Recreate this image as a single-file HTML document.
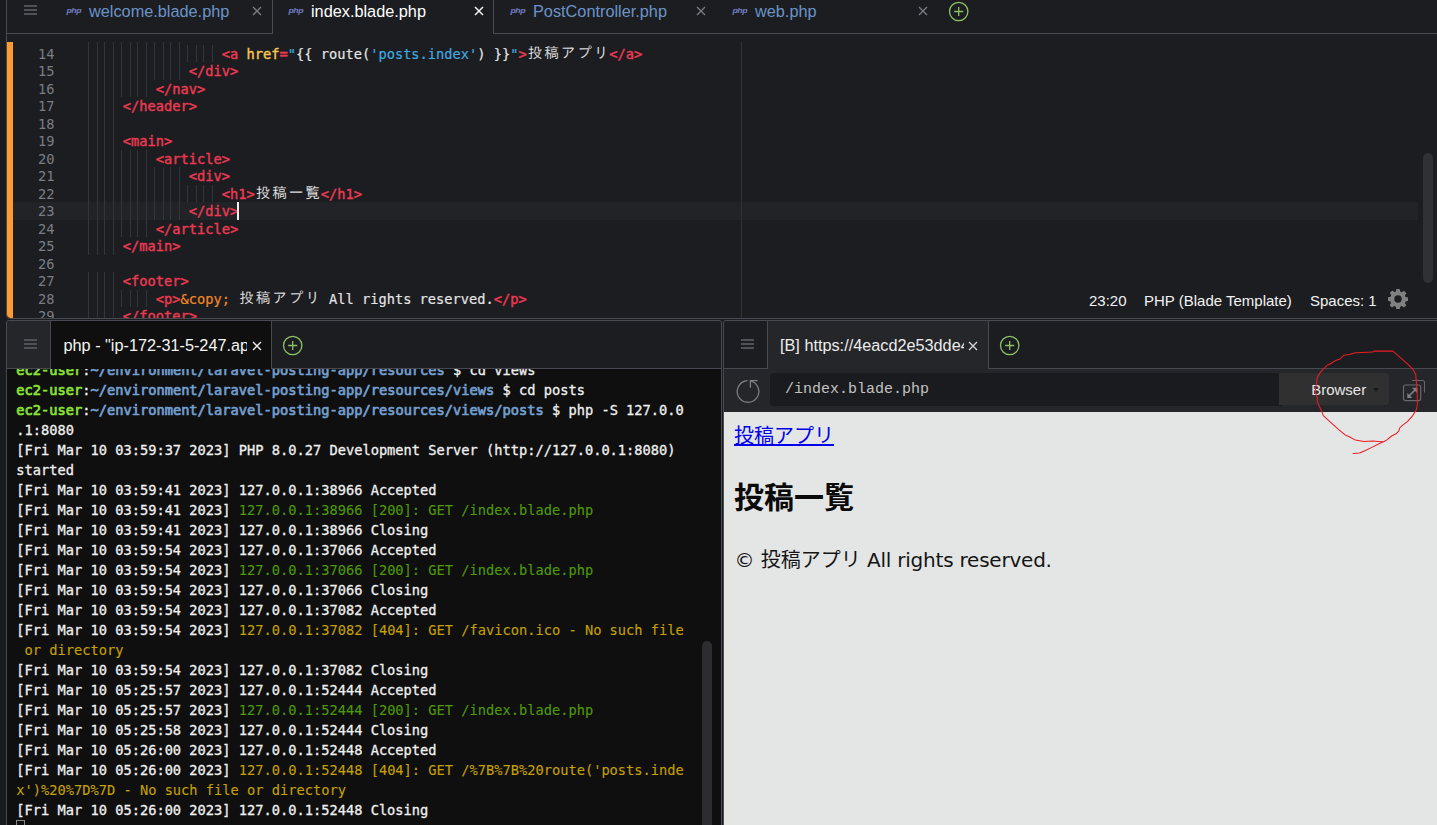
<!DOCTYPE html>
<html lang="ja">
<head>
<meta charset="utf-8">
<title>index.blade.php - AWS Cloud9</title>
<style>
*{box-sizing:border-box;margin:0;padding:0}
html,body{width:1437px;height:825px;overflow:hidden;background:#1c1d21}
body{position:relative;font-family:"Liberation Sans","Noto Sans CJK JP",sans-serif;color:#e6e6e6}
.abs{position:absolute}
/* ---------- editor pane ---------- */
#edpane{position:absolute;left:6px;top:-4px;width:1440px;height:323px;border:1px solid #494a51;border-radius:4px;background:#1c1d21;overflow:hidden}
#leftstrip{position:absolute;left:0;top:0;width:6px;height:825px;background:#1a1b1f}
.tabline{position:absolute;height:1px;background:#494a51}
.vline{position:absolute;width:1px;background:#494a51}
.tab{position:absolute;top:0;height:33px;font-size:16.3px;line-height:20px;color:#6a94c8;white-space:nowrap}
.tab .lbl{position:absolute;top:1px}
.phpi{position:absolute;top:6.4px;font:italic bold 8.8px/12px "Liberation Sans",sans-serif;color:#737dc4;letter-spacing:-0.4px;transform:scaleY(.8);transform-origin:0 0;margin-left:.4px}
.x{position:absolute}
.ham{position:absolute;width:13px;height:10px}
.ham i{position:absolute;left:0;width:13px;height:2px;background:#4f5157}
#orange{position:absolute;left:7px;top:42px;width:6px;height:276px;background:#ff9a2e;border-bottom-left-radius:4px}
/* code */
.ln{position:absolute;left:20px;width:34.5px;height:17.5px;text-align:right;color:#7b7d84}
.ln,.cl,.tr{font-family:"DejaVu Sans Mono","Liberation Mono",monospace;font-size:13.7px;line-height:17.5px;white-space:pre}
.cl{position:absolute;height:17.5px;color:#e4e4e4;-webkit-text-stroke:0.18px}
.gd{position:absolute;left:80.75px;height:17.5px;background-image:repeating-linear-gradient(90deg,transparent 0,transparent 7.25px,#34353a 7.25px,#34353a 8.25px)}
.gv{position:absolute;width:1px;background:#31363b}
.t{color:#ec3a52;-webkit-text-stroke:0.4px}.a{color:#f8c54f;-webkit-text-stroke:0.4px}.s{color:#41a9e0}.w{color:#e4e4e4}.e{color:#f28826}
.j{display:inline-block;width:16.5px;text-align:center;font-family:"IPAGothic","Noto Sans CJK JP",sans-serif;font-size:14.6px;line-height:0;color:#dadada;-webkit-text-stroke:0;position:relative;top:-0.4px}
#actline{position:absolute;left:13px;top:202px;width:1405px;height:18px;background:#222327}
#cursor{position:absolute;left:237px;top:202px;width:2px;height:17.5px;background:#f0f0f0}
#pmargin{position:absolute;left:741px;top:42px;width:1px;height:276px;background:#333130}
#vscroll{position:absolute;left:1423px;top:153px;width:10px;height:130px;border-radius:5px;background:#303135}
.st{position:absolute;top:292px;font-size:15px;line-height:18px;color:#f2f2f2;white-space:nowrap}
/* ---------- bottom panes ---------- */
.pane{position:absolute;border:1px solid #494a51;border-radius:3px 3px 0 0;overflow:hidden}
#lp{left:6px;top:320px;width:716px;height:520px;background:#1c1d21}
#rp{left:723px;top:320px;width:730px;height:520px;background:#1c1d21}
.hbox{position:absolute;left:0;top:0;width:44px;height:48px;border-right:1px solid #494a51;border-bottom:1px solid #494a51}
.btab{position:absolute;top:0;height:48px;font-size:16.25px;color:#ececec;white-space:nowrap;overflow:hidden}
#term{position:absolute;left:0;top:48px;width:714px;height:470px;background:#0f0f0f;overflow:hidden}
.tr{position:absolute;left:9.3px;height:20px;line-height:20px;color:#f0f0f0;-webkit-text-stroke:0.3px}
.g{color:#8ae234;-webkit-text-stroke:0.7px #8ae234}.b{color:#729fcf;-webkit-text-stroke:0.7px #729fcf}.k{color:#4e9a06;-webkit-text-stroke:0.12px}.y{color:#c4a000;-webkit-text-stroke:0.12px}.n{color:#f0f0f0}
#tscroll{position:absolute;left:695.4px;top:272px;width:9.6px;height:220px;border-radius:5px;background:#2d2d2f}
#tcur{position:absolute;left:9px;top:451px;width:9px;height:20px;border:1px solid #888}
#tool{position:absolute;left:0;top:48px;width:730px;height:43px;background:#25262a}
#url{position:absolute;left:46px;top:4px;width:512px;height:33px;background:#1a1b1e;border-radius:4px 0 0 4px;font:15px/34px "Liberation Mono",monospace;color:#c2c2c2;padding-left:15px;white-space:pre}
#bbtn{position:absolute;left:554px;top:4px;width:111px;height:32px;background:#303030;border-left:1px solid #1c1c1c;border-radius:0 4px 4px 0;font-size:15px;line-height:33px;color:#e6e6e6}
#prev{position:absolute;left:0;top:91px;width:730px;height:430px;background:#e4e6e5;color:#111;font-family:"DejaVu Sans","Noto Sans CJK JP",sans-serif}
#prev a{position:absolute;left:10px;top:7.5px;font-size:20px;line-height:30px;color:#0000ee;text-decoration:underline;font-family:"Noto Sans CJK JP",sans-serif}
#prev h1{position:absolute;left:10px;top:61px;font-size:30px;line-height:45px;font-weight:bold;font-family:"Noto Sans CJK JP",sans-serif;color:#0a0a0a}
#prev p{position:absolute;left:10.5px;top:133px;font-size:20px;line-height:30px;white-space:nowrap;color:#151515}
</style>
</head>
<body>
<div id="leftstrip"></div>
<div id="edpane">
<!-- coordinates inside edpane are page coords minus (7,-3) ; use inner wrapper to restore page coords -->
<div class="abs" id="ed" style="left:-7px;top:3px;width:1437px;height:320px">
  <!-- tab bar -->
  <div class="tabline" style="left:7px;top:33px;width:265px"></div>
  <div class="tabline" style="left:493px;top:33px;width:950px"></div>
  <div class="vline" style="left:272px;top:0;height:34px"></div>
  <div class="vline" style="left:493px;top:0;height:34px"></div>
  <div class="ham" style="left:24px;top:5px"><i style="top:0"></i><i style="top:4px"></i><i style="top:8px"></i></div>

  <div class="tab" style="left:50px;width:222px"><span class="phpi" style="left:16px">php</span><span class="lbl" style="left:39px">welcome.blade.php</span>
    <svg class="x" style="left:202px;top:6px" width="10" height="10" viewBox="0 0 10 10"><path d="M1 1L9 9M9 1L1 9" stroke="#7c7e84" stroke-width="1.3" fill="none"/></svg></div>
  <div class="tab" style="left:272px;width:222px;color:#ffffff"><span class="phpi" style="left:16px">php</span><span class="lbl" style="left:39px">index.blade.php</span>
    <svg class="x" style="left:202px;top:6px" width="10" height="10" viewBox="0 0 10 10"><path d="M1 1L9 9M9 1L1 9" stroke="#f4f4f4" stroke-width="1.5" fill="none"/></svg></div>
  <div class="tab" style="left:494px;width:222px"><span class="phpi" style="left:16px">php</span><span class="lbl" style="left:39px">PostController.php</span>
    <svg class="x" style="left:202px;top:6px" width="10" height="10" viewBox="0 0 10 10"><path d="M1 1L9 9M9 1L1 9" stroke="#7c7e84" stroke-width="1.3" fill="none"/></svg></div>
  <div class="tab" style="left:716px;width:222px"><span class="phpi" style="left:16px">php</span><span class="lbl" style="left:39px">web.php</span>
    <svg class="x" style="left:202px;top:6px" width="10" height="10" viewBox="0 0 10 10"><path d="M1 1L9 9M9 1L1 9" stroke="#7c7e84" stroke-width="1.3" fill="none"/></svg></div>
  <svg class="abs" style="left:948px;top:1px" width="22" height="22" viewBox="0 0 22 22"><circle cx="10.7" cy="10.5" r="9.2" fill="none" stroke="#8cc265" stroke-width="1.3"/><path d="M6.2 10.5H15.2M10.7 6V15" stroke="#8cc265" stroke-width="1.3" fill="none"/></svg>

  <div id="orange"></div>
  <div id="actline"></div>
  <div id="pmargin"></div>
<i class="gv" style="left:88px;top:42px;height:2.5px"></i><i class="gv" style="left:97px;top:42px;height:2.5px"></i><i class="gv" style="left:104px;top:42px;height:2.5px"></i><i class="gv" style="left:113px;top:42px;height:2.5px"></i><i class="gv" style="left:121px;top:42px;height:2.5px"></i><i class="gv" style="left:130px;top:42px;height:2.5px"></i><i class="gv" style="left:137px;top:42px;height:2.5px"></i><i class="gv" style="left:146px;top:42px;height:2.5px"></i><i class="gv" style="left:154px;top:42px;height:2.5px"></i><i class="gv" style="left:163px;top:42px;height:2.5px"></i><i class="gv" style="left:170px;top:42px;height:2.5px"></i><i class="gv" style="left:179px;top:42px;height:2.5px"></i>
<div class="ln" style="top:45.6px">14</div>
<i class="gv" style="left:88px;top:44.5px;height:17.5px"></i><i class="gv" style="left:97px;top:44.5px;height:17.5px"></i><i class="gv" style="left:104px;top:44.5px;height:17.5px"></i><i class="gv" style="left:113px;top:44.5px;height:17.5px"></i><i class="gv" style="left:121px;top:44.5px;height:17.5px"></i><i class="gv" style="left:130px;top:44.5px;height:17.5px"></i><i class="gv" style="left:137px;top:44.5px;height:17.5px"></i><i class="gv" style="left:146px;top:44.5px;height:17.5px"></i><i class="gv" style="left:154px;top:44.5px;height:17.5px"></i><i class="gv" style="left:163px;top:44.5px;height:17.5px"></i><i class="gv" style="left:170px;top:44.5px;height:17.5px"></i><i class="gv" style="left:179px;top:44.5px;height:17.5px"></i><i class="gv" style="left:187px;top:44.5px;height:17.5px"></i><i class="gv" style="left:196px;top:44.5px;height:17.5px"></i><i class="gv" style="left:203px;top:44.5px;height:17.5px"></i><i class="gv" style="left:212px;top:44.5px;height:17.5px"></i>
<div class="cl" style="top:45.6px;left:221.8px"><span class="t">&lt;a</span><span class="w"> </span><span class="a">href</span><span class="t">=</span><span class="s">"</span><span class="w">{{ route(</span><span class="s">'posts.index'</span><span class="w">) }}</span><span class="s">"</span><span class="t">&gt;</span><span class="j">投</span><span class="j">稿</span><span class="j">ア</span><span class="j">プ</span><span class="j">リ</span><span class="t">&lt;/a&gt;</span></div>
<div class="ln" style="top:63.1px">15</div>
<i class="gv" style="left:88px;top:62.0px;height:17.5px"></i><i class="gv" style="left:97px;top:62.0px;height:17.5px"></i><i class="gv" style="left:104px;top:62.0px;height:17.5px"></i><i class="gv" style="left:113px;top:62.0px;height:17.5px"></i><i class="gv" style="left:121px;top:62.0px;height:17.5px"></i><i class="gv" style="left:130px;top:62.0px;height:17.5px"></i><i class="gv" style="left:137px;top:62.0px;height:17.5px"></i><i class="gv" style="left:146px;top:62.0px;height:17.5px"></i><i class="gv" style="left:154px;top:62.0px;height:17.5px"></i><i class="gv" style="left:163px;top:62.0px;height:17.5px"></i><i class="gv" style="left:170px;top:62.0px;height:17.5px"></i><i class="gv" style="left:179px;top:62.0px;height:17.5px"></i>
<div class="cl" style="top:63.1px;left:188.8px"><span class="t">&lt;/div&gt;</span></div>
<div class="ln" style="top:80.6px">16</div>
<i class="gv" style="left:88px;top:79.5px;height:17.5px"></i><i class="gv" style="left:97px;top:79.5px;height:17.5px"></i><i class="gv" style="left:104px;top:79.5px;height:17.5px"></i><i class="gv" style="left:113px;top:79.5px;height:17.5px"></i><i class="gv" style="left:121px;top:79.5px;height:17.5px"></i><i class="gv" style="left:130px;top:79.5px;height:17.5px"></i><i class="gv" style="left:137px;top:79.5px;height:17.5px"></i><i class="gv" style="left:146px;top:79.5px;height:17.5px"></i>
<div class="cl" style="top:80.6px;left:155.8px"><span class="t">&lt;/nav&gt;</span></div>
<div class="ln" style="top:98.1px">17</div>
<i class="gv" style="left:88px;top:97.0px;height:17.5px"></i><i class="gv" style="left:97px;top:97.0px;height:17.5px"></i><i class="gv" style="left:104px;top:97.0px;height:17.5px"></i><i class="gv" style="left:113px;top:97.0px;height:17.5px"></i>
<div class="cl" style="top:98.1px;left:122.8px"><span class="t">&lt;/header&gt;</span></div>
<div class="ln" style="top:115.6px">18</div>
<i class="gv" style="left:88px;top:114.5px;height:17.5px"></i><i class="gv" style="left:97px;top:114.5px;height:17.5px"></i><i class="gv" style="left:104px;top:114.5px;height:17.5px"></i><i class="gv" style="left:113px;top:114.5px;height:17.5px"></i>
<div class="ln" style="top:133.1px">19</div>
<i class="gv" style="left:88px;top:132.0px;height:17.5px"></i><i class="gv" style="left:97px;top:132.0px;height:17.5px"></i><i class="gv" style="left:104px;top:132.0px;height:17.5px"></i><i class="gv" style="left:113px;top:132.0px;height:17.5px"></i>
<div class="cl" style="top:133.1px;left:122.8px"><span class="t">&lt;main&gt;</span></div>
<div class="ln" style="top:150.6px">20</div>
<i class="gv" style="left:88px;top:149.5px;height:17.5px"></i><i class="gv" style="left:97px;top:149.5px;height:17.5px"></i><i class="gv" style="left:104px;top:149.5px;height:17.5px"></i><i class="gv" style="left:113px;top:149.5px;height:17.5px"></i><i class="gv" style="left:121px;top:149.5px;height:17.5px"></i><i class="gv" style="left:130px;top:149.5px;height:17.5px"></i><i class="gv" style="left:137px;top:149.5px;height:17.5px"></i><i class="gv" style="left:146px;top:149.5px;height:17.5px"></i>
<div class="cl" style="top:150.6px;left:155.8px"><span class="t">&lt;article&gt;</span></div>
<div class="ln" style="top:168.1px">21</div>
<i class="gv" style="left:88px;top:167.0px;height:17.5px"></i><i class="gv" style="left:97px;top:167.0px;height:17.5px"></i><i class="gv" style="left:104px;top:167.0px;height:17.5px"></i><i class="gv" style="left:113px;top:167.0px;height:17.5px"></i><i class="gv" style="left:121px;top:167.0px;height:17.5px"></i><i class="gv" style="left:130px;top:167.0px;height:17.5px"></i><i class="gv" style="left:137px;top:167.0px;height:17.5px"></i><i class="gv" style="left:146px;top:167.0px;height:17.5px"></i><i class="gv" style="left:154px;top:167.0px;height:17.5px"></i><i class="gv" style="left:163px;top:167.0px;height:17.5px"></i><i class="gv" style="left:170px;top:167.0px;height:17.5px"></i><i class="gv" style="left:179px;top:167.0px;height:17.5px"></i>
<div class="cl" style="top:168.1px;left:188.8px"><span class="t">&lt;div&gt;</span></div>
<div class="ln" style="top:185.6px">22</div>
<i class="gv" style="left:88px;top:184.5px;height:17.5px"></i><i class="gv" style="left:97px;top:184.5px;height:17.5px"></i><i class="gv" style="left:104px;top:184.5px;height:17.5px"></i><i class="gv" style="left:113px;top:184.5px;height:17.5px"></i><i class="gv" style="left:121px;top:184.5px;height:17.5px"></i><i class="gv" style="left:130px;top:184.5px;height:17.5px"></i><i class="gv" style="left:137px;top:184.5px;height:17.5px"></i><i class="gv" style="left:146px;top:184.5px;height:17.5px"></i><i class="gv" style="left:154px;top:184.5px;height:17.5px"></i><i class="gv" style="left:163px;top:184.5px;height:17.5px"></i><i class="gv" style="left:170px;top:184.5px;height:17.5px"></i><i class="gv" style="left:179px;top:184.5px;height:17.5px"></i><i class="gv" style="left:187px;top:184.5px;height:17.5px"></i><i class="gv" style="left:196px;top:184.5px;height:17.5px"></i><i class="gv" style="left:203px;top:184.5px;height:17.5px"></i><i class="gv" style="left:212px;top:184.5px;height:17.5px"></i>
<div class="cl" style="top:185.6px;left:221.8px"><span class="t">&lt;h1&gt;</span><span class="j">投</span><span class="j">稿</span><span class="j">一</span><span class="j">覧</span><span class="t">&lt;/h1&gt;</span></div>
<div class="ln" style="top:203.1px">23</div>
<i class="gv" style="left:88px;top:202.0px;height:17.5px"></i><i class="gv" style="left:97px;top:202.0px;height:17.5px"></i><i class="gv" style="left:104px;top:202.0px;height:17.5px"></i><i class="gv" style="left:113px;top:202.0px;height:17.5px"></i><i class="gv" style="left:121px;top:202.0px;height:17.5px"></i><i class="gv" style="left:130px;top:202.0px;height:17.5px"></i><i class="gv" style="left:137px;top:202.0px;height:17.5px"></i><i class="gv" style="left:146px;top:202.0px;height:17.5px"></i><i class="gv" style="left:154px;top:202.0px;height:17.5px"></i><i class="gv" style="left:163px;top:202.0px;height:17.5px"></i><i class="gv" style="left:170px;top:202.0px;height:17.5px"></i><i class="gv" style="left:179px;top:202.0px;height:17.5px"></i>
<div class="cl" style="top:203.1px;left:188.8px"><span class="t">&lt;/div&gt;</span></div>
<div class="ln" style="top:220.6px">24</div>
<i class="gv" style="left:88px;top:219.5px;height:17.5px"></i><i class="gv" style="left:97px;top:219.5px;height:17.5px"></i><i class="gv" style="left:104px;top:219.5px;height:17.5px"></i><i class="gv" style="left:113px;top:219.5px;height:17.5px"></i><i class="gv" style="left:121px;top:219.5px;height:17.5px"></i><i class="gv" style="left:130px;top:219.5px;height:17.5px"></i><i class="gv" style="left:137px;top:219.5px;height:17.5px"></i><i class="gv" style="left:146px;top:219.5px;height:17.5px"></i>
<div class="cl" style="top:220.6px;left:155.8px"><span class="t">&lt;/article&gt;</span></div>
<div class="ln" style="top:238.1px">25</div>
<i class="gv" style="left:88px;top:237.0px;height:17.5px"></i><i class="gv" style="left:97px;top:237.0px;height:17.5px"></i><i class="gv" style="left:104px;top:237.0px;height:17.5px"></i><i class="gv" style="left:113px;top:237.0px;height:17.5px"></i>
<div class="cl" style="top:238.1px;left:122.8px"><span class="t">&lt;/main&gt;</span></div>
<div class="ln" style="top:255.6px">26</div>
<div class="ln" style="top:273.1px">27</div>
<i class="gv" style="left:88px;top:272.0px;height:17.5px"></i><i class="gv" style="left:97px;top:272.0px;height:17.5px"></i><i class="gv" style="left:104px;top:272.0px;height:17.5px"></i><i class="gv" style="left:113px;top:272.0px;height:17.5px"></i>
<div class="cl" style="top:273.1px;left:122.8px"><span class="t">&lt;footer&gt;</span></div>
<div class="ln" style="top:290.6px">28</div>
<i class="gv" style="left:88px;top:289.5px;height:17.5px"></i><i class="gv" style="left:97px;top:289.5px;height:17.5px"></i><i class="gv" style="left:104px;top:289.5px;height:17.5px"></i><i class="gv" style="left:113px;top:289.5px;height:17.5px"></i><i class="gv" style="left:121px;top:289.5px;height:17.5px"></i><i class="gv" style="left:130px;top:289.5px;height:17.5px"></i><i class="gv" style="left:137px;top:289.5px;height:17.5px"></i><i class="gv" style="left:146px;top:289.5px;height:17.5px"></i>
<div class="cl" style="top:290.6px;left:155.8px"><span class="t">&lt;p&gt;</span><span class="e">&amp;copy;</span><span class="w"> </span><span class="j">投</span><span class="j">稿</span><span class="j">ア</span><span class="j">プ</span><span class="j">リ</span><span class="w"> All rights reserved.</span><span class="t">&lt;/p&gt;</span></div>
<div class="ln" style="top:308.1px">29</div>
<i class="gv" style="left:88px;top:307.0px;height:17.5px"></i><i class="gv" style="left:97px;top:307.0px;height:17.5px"></i><i class="gv" style="left:104px;top:307.0px;height:17.5px"></i><i class="gv" style="left:113px;top:307.0px;height:17.5px"></i>
<div class="cl" style="top:308.1px;left:122.8px"><span class="t">&lt;/footer&gt;</span></div>
  <div id="cursor"></div>
  <div id="vscroll"></div>
  <div class="st" style="left:1089px">23:20</div>
  <div class="st" style="left:1144px">PHP (Blade Template)</div>
  <div class="st" style="left:1310px">Spaces: 1</div>
  <svg class="abs" style="left:1388px;top:289px" width="20" height="20" viewBox="0 0 20 20"><path fill="#808080" fill-rule="evenodd" d="M8.3 0h3.4l.5 2.6 1.6.7 2.2-1.5 2.4 2.4-1.5 2.2.7 1.6 2.6.5v3.4l-2.6.5-.7 1.6 1.5 2.2-2.4 2.4-2.2-1.5-1.6.7-.5 2.6H8.3l-.5-2.6-1.6-.7-2.2 1.5-2.4-2.4 1.5-2.2-.7-1.6L0 11.7V8.3l2.6-.5.7-1.6-1.5-2.2 2.4-2.4 2.2 1.5 1.6-.7zM10 6.3a3.7 3.7 0 100 7.4 3.7 3.7 0 000-7.4z"/></svg>
</div>
</div>

<!-- left bottom pane -->
<div class="pane" id="lp">
  <div class="hbox" style="background:#25262a"><div class="ham" style="left:17px;top:18px"><i style="top:0"></i><i style="top:4px"></i><i style="top:8px"></i></div></div>
  <div class="tabline" style="left:264px;top:47px;width:460px"></div>
  <div class="vline" style="left:264px;top:0;height:48px"></div>
  <div class="btab" style="left:44px;width:220px;background:#0f0f0f"><span class="abs" style="left:12.5px;top:14px;line-height:20px;width:183px;overflow:hidden;color:#f4f4f4">php - "ip-172-31-5-247.ap</span>
    <svg class="x" style="left:200.5px;top:20px" width="10" height="10" viewBox="0 0 10 10"><path d="M1 1L9 9M9 1L1 9" stroke="#ececec" stroke-width="1.4" fill="none"/></svg></div>
  <svg class="abs" style="left:275px;top:14px" width="22" height="22" viewBox="0 0 22 22"><circle cx="10.7" cy="10.5" r="9.2" fill="none" stroke="#8cc265" stroke-width="1.3"/><path d="M6.2 10.5H15.2M10.7 6V15" stroke="#8cc265" stroke-width="1.3" fill="none"/></svg>
  <div id="term">
<div class="tr" style="top:-9px"><span class="g">ec2-user</span><span class="n">:</span><span class="b">~/environment/laravel-posting-app/resources</span><span class="n"> $ cd views</span></div>
<div class="tr" style="top:11px"><span class="g">ec2-user</span><span class="n">:</span><span class="b">~/environment/laravel-posting-app/resources/views</span><span class="n"> $ cd posts</span></div>
<div class="tr" style="top:31px"><span class="g">ec2-user</span><span class="n">:</span><span class="b">~/environment/laravel-posting-app/resources/views/posts</span><span class="n"> $ php -S 127.0.0</span></div>
<div class="tr" style="top:51px"><span class="n">.1:8080</span></div>
<div class="tr" style="top:71px"><span class="n">[Fri Mar 10 03:59:37 2023] PHP 8.0.27 Development Server (http://127.0.0.1:8080)</span></div>
<div class="tr" style="top:91px"><span class="n">started</span></div>
<div class="tr" style="top:111px"><span class="n">[Fri Mar 10 03:59:41 2023] 127.0.0.1:38966 Accepted</span></div>
<div class="tr" style="top:131px"><span class="n">[Fri Mar 10 03:59:41 2023] </span><span class="k">127.0.0.1:38966 [200]: GET /index.blade.php</span></div>
<div class="tr" style="top:151px"><span class="n">[Fri Mar 10 03:59:41 2023] 127.0.0.1:38966 Closing</span></div>
<div class="tr" style="top:171px"><span class="n">[Fri Mar 10 03:59:54 2023] 127.0.0.1:37066 Accepted</span></div>
<div class="tr" style="top:191px"><span class="n">[Fri Mar 10 03:59:54 2023] </span><span class="k">127.0.0.1:37066 [200]: GET /index.blade.php</span></div>
<div class="tr" style="top:211px"><span class="n">[Fri Mar 10 03:59:54 2023] 127.0.0.1:37066 Closing</span></div>
<div class="tr" style="top:231px"><span class="n">[Fri Mar 10 03:59:54 2023] 127.0.0.1:37082 Accepted</span></div>
<div class="tr" style="top:251px"><span class="n">[Fri Mar 10 03:59:54 2023] </span><span class="y">127.0.0.1:37082 [404]: GET /favicon.ico - No such file</span></div>
<div class="tr" style="top:271px"><span class="y"> or directory</span></div>
<div class="tr" style="top:291px"><span class="n">[Fri Mar 10 03:59:54 2023] 127.0.0.1:37082 Closing</span></div>
<div class="tr" style="top:311px"><span class="n">[Fri Mar 10 05:25:57 2023] 127.0.0.1:52444 Accepted</span></div>
<div class="tr" style="top:331px"><span class="n">[Fri Mar 10 05:25:57 2023] </span><span class="k">127.0.0.1:52444 [200]: GET /index.blade.php</span></div>
<div class="tr" style="top:351px"><span class="n">[Fri Mar 10 05:25:58 2023] 127.0.0.1:52444 Closing</span></div>
<div class="tr" style="top:371px"><span class="n">[Fri Mar 10 05:26:00 2023] 127.0.0.1:52448 Accepted</span></div>
<div class="tr" style="top:391px"><span class="n">[Fri Mar 10 05:26:00 2023] </span><span class="y">127.0.0.1:52448 [404]: GET /%7B%7B%20route('posts.inde</span></div>
<div class="tr" style="top:411px"><span class="y">x')%20%7D%7D - No such file or directory</span></div>
<div class="tr" style="top:431px"><span class="n">[Fri Mar 10 05:26:00 2023] 127.0.0.1:52448 Closing</span></div>
    <div id="tcur"></div>
    <div id="tscroll"></div>
  </div>
</div>

<!-- right bottom pane -->
<div class="pane" id="rp">
  <div class="hbox"><div class="ham" style="left:17px;top:18px"><i style="top:0"></i><i style="top:4px"></i><i style="top:8px"></i></div></div>
  <div class="tabline" style="left:265px;top:47px;width:470px"></div>
  <div class="vline" style="left:264px;top:0;height:48px"></div>
  <div class="btab" style="left:44px;width:220px;background:#25262a"><span class="abs" style="left:12px;top:14px;line-height:20px;width:184px;overflow:hidden">[B] https://4eacd2e53dde4</span>
    <svg class="x" style="left:200px;top:20px" width="10" height="10" viewBox="0 0 10 10"><path d="M1 1L9 9M9 1L1 9" stroke="#d8d8d8" stroke-width="1.25" fill="none"/></svg></div>
  <svg class="abs" style="left:275px;top:14px" width="22" height="22" viewBox="0 0 22 22"><circle cx="10.7" cy="10.5" r="9.2" fill="none" stroke="#8cc265" stroke-width="1.3"/><path d="M6.2 10.5H15.2M10.7 6V15" stroke="#8cc265" stroke-width="1.3" fill="none"/></svg>
  <div id="tool">
    <svg class="abs" style="left:11px;top:8px" width="28" height="28" viewBox="0 0 28 28"><path d="M12.5 3.7A10.8 10.8 0 1 0 15.6 4" fill="none" stroke="#808080" stroke-width="1.25"/><path d="M15.4 10.8V3.6H22.6" fill="none" stroke="#808080" stroke-width="1.3"/></svg>
    <div id="url">/index.blade.php</div>
    <div id="bbtn"><span class="abs" style="left:32.2px;top:0">Browser</span><span class="abs" style="left:94px;top:15px;width:0;height:0;border-left:3.5px solid transparent;border-right:3.5px solid transparent;border-top:4px solid #1a1a1a"></span></div>
    <svg class="abs" style="left:678px;top:10px" width="24" height="24" viewBox="0 0 24 24"><rect x="1.5" y="6" width="17.2" height="15.6" rx="2" fill="none" stroke="#6a6a6a" stroke-width="1.2"/><path d="M10 1.5h10.5a2 2 0 0 1 2 2v10" fill="none" stroke="#666" stroke-width="1.1"/><path d="M6.5 17.5L14 10" stroke="#808080" stroke-width="1.7" fill="none"/><path d="M15.3 8.8v5.4l-5.4-5.4zM5.3 19v-5l5 5z" fill="#808080"/></svg>
  </div>
  <div id="prev">
    <a>投稿アプリ</a>
    <h1>投稿一覧</h1>
    <p>© 投稿アプリ<span style="letter-spacing:-0.22px"> All rights reserved.</span></p>
  </div>
</div>

<!-- hand-drawn red annotation -->
<svg class="abs" style="left:0;top:0;pointer-events:none" width="1437" height="825" viewBox="0 0 1437 825"><path id="redpath" d="M1353.1 453.4 L1359.6 453.1 L1365.4 450.5 L1371.3 447.6 L1378.5 444.0 L1383.6 441.8 L1387.3 439.6 L1391.6 436.0 L1396.0 433.8 L1398.9 430.9 L1399.6 428.0 L1401.8 425.8 L1407.6 421.4 L1412.7 415.6 L1416.3 409.8 L1417.5 404.0 L1417.1 390.9 L1416.3 380.7 L1415.6 374.2 L1412.7 369.1 L1408.3 364.7 L1401.8 358.9 L1395.3 353.1 L1392.8 351.1 L1374.2 351.1 L1372.7 352.1 L1362.5 352.4 L1355.3 352.8 L1349.4 354.5 L1343.6 355.3 L1340.0 358.9 L1335.6 360.4 L1331.3 363.3 L1326.9 365.5 L1323.3 369.1 L1319.6 373.4 L1317.2 377.8 L1316.7 382.2 L1315.7 388.0 L1315.3 392.4 L1317.5 398.2 L1317.2 401.1 L1318.9 405.4 L1321.8 411.3 L1323.3 415.6 L1332.0 423.6 L1339.3 430.2 L1345.8 435.3 L1349.4 436.7 L1355.3 440.1 L1364.0 441.4 L1372.7 441.1 L1378.5 441.4 L1383.6 441.8" fill="none" stroke="#ee1c25" stroke-width="1.05" stroke-linejoin="round" stroke-linecap="round"/></svg>
</body>
</html>
